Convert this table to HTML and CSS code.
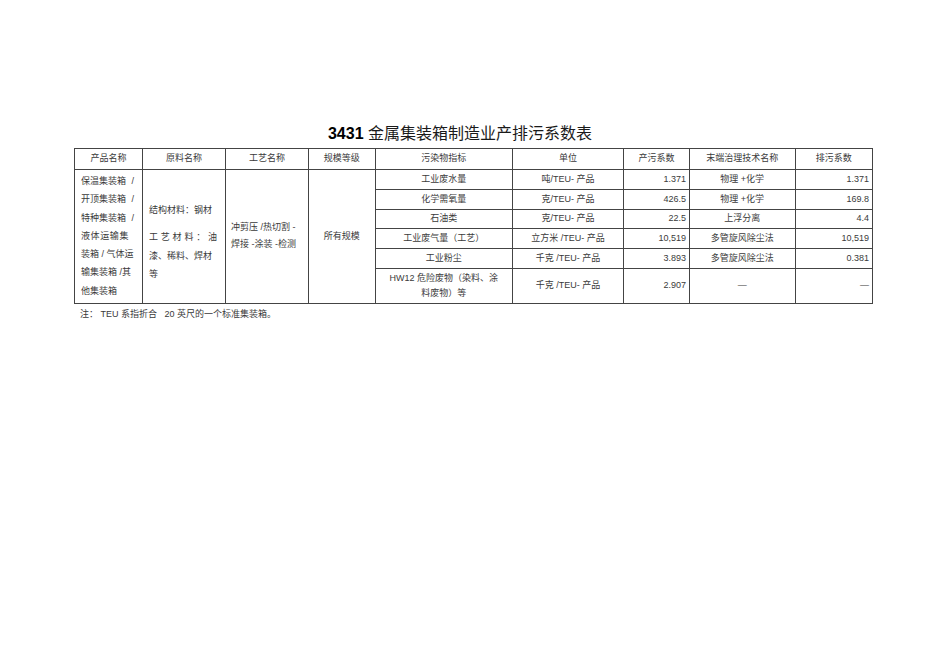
FILE: index.html
```html
<!DOCTYPE html>
<html lang="zh-CN">
<head>
<meta charset="utf-8">
<title>3431 金属集装箱制造业产排污系数表</title>
<link rel="stylesheet" href="styles.css">
</head>
<body>
<div class="page">
  <div class="title"><b>3431</b> 金属集装箱制造业产排污系数表</div>
  <table class="coef">
    <colgroup>
      <col class="c1"><col class="c2"><col class="c3"><col class="c4"><col class="c5"><col class="c6"><col class="c7"><col class="c8"><col class="c9">
    </colgroup>
    <tr class="head">
      <td>产品名称</td><td>原料名称</td><td>工艺名称</td><td>规模等级</td><td>污染物指标</td><td>单位</td><td>产污系数</td><td>末端治理技术名称</td><td>排污系数</td>
    </tr>
    <tr class="r1">
      <td rowspan="6" class="prod">
        <div class="ln sb"><span>保温集装箱</span><span>/</span></div>
        <div class="ln sb"><span>开顶集装箱</span><span>/</span></div>
        <div class="ln sb"><span>特种集装箱</span><span>/</span></div>
        <div class="ln sp">液体运输集</div>
        <div class="ln">装箱 / 气体运</div>
        <div class="ln">输集装箱 /其</div>
        <div class="ln">他集装箱</div>
      </td>
      <td rowspan="6" class="mat">
        <div class="ln first">结构材料：钢材</div>
        <div class="ln just">工艺材料：油</div>
        <div class="ln">漆、稀料、焊材</div>
        <div class="ln">等</div>
      </td>
      <td rowspan="6" class="proc">冲剪压 /热切割 -<br>焊接 -涂装 -检测</td>
      <td rowspan="6">所有规模</td>
      <td>工业废水量</td><td>吨/TEU- 产品</td><td class="num">1.371</td><td>物理 +化学</td><td class="num">1.371</td>
    </tr>
    <tr class="r2">
      <td>化学需氧量</td><td>克/TEU- 产品</td><td class="num">426.5</td><td>物理 +化学</td><td class="num">169.8</td>
    </tr>
    <tr class="r3">
      <td>石油类</td><td>克/TEU- 产品</td><td class="num">22.5</td><td>上浮分离</td><td class="num">4.4</td>
    </tr>
    <tr class="r4">
      <td>工业废气量（工艺）</td><td>立方米 /TEU- 产品</td><td class="num">10,519</td><td>多管旋风除尘法</td><td class="num">10,519</td>
    </tr>
    <tr class="r5">
      <td>工业粉尘</td><td>千克 /TEU- 产品</td><td class="num">3.893</td><td>多管旋风除尘法</td><td class="num">0.381</td>
    </tr>
    <tr class="r6">
      <td class="two">HW12 危险废物（染料、涂<br>料废物）等</td><td>千克 /TEU- 产品</td><td class="num">2.907</td><td>—</td><td class="num">—</td>
    </tr>
  </table>
  <div class="note">注： TEU 系指折合&nbsp;&nbsp; 20 英尺的一个标准集装箱。</div>
</div>
</body>
</html>
```

FILE: styles.css
```css
html, body {
  margin: 0;
  background: #ffffff;
}

body {
  font-family: "Liberation Sans", "Noto Sans CJK SC", sans-serif;
  color: #3a3a3a;
}

.page {
  padding: 123px 0 0 74px;
}

.title {
  width: 799px;
  box-sizing: border-box;
  padding-right: 27px;
  text-align: center;
  font-size: 16px;
  line-height: 21px;
  margin-bottom: 4px;
  color: #1a1a1a;
}

.title b {
  font-weight: bold;
  color: #000000;
}

.coef {
  border-collapse: collapse;
  table-layout: fixed;
  width: 799px;
  font-size: 9px;
  line-height: 11px;
}

.c1 { width: 68px; }
.c2 { width: 83px; }
.c3 { width: 83px; }
.c4 { width: 66.5px; }
.c5 { width: 137.5px; }
.c6 { width: 111px; }
.c7 { width: 66px; }
.c8 { width: 105.5px; }
.c9 { width: 77.5px; }

.coef td {
  border: 1px solid #444444;
  padding: 0 3px;
  text-align: center;
  vertical-align: middle;
  white-space: nowrap;
}

.head { height: 20.5px; }
.r1 { height: 20px; }
.r2 { height: 20px; }
.r3 { height: 19.5px; }
.r4 { height: 19.5px; }
.r5 { height: 20px; }
.r6 { height: 35px; }

.coef td.num {
  text-align: right;
  padding-right: 3px;
}

.coef td.prod,
.coef td.mat {
  text-align: left;
  padding: 0 8px 0 6px;
  line-height: 18.3px;
}

.coef td.mat {
  padding-top: 12px;
}

.ln.sb {
  display: flex;
  justify-content: space-between;
}

.ln.sp {
  letter-spacing: 0.6px;
}

.ln.first {
  margin-bottom: 9.4px;
}

.ln.just {
  text-align: justify;
  text-align-last: justify;
}

.coef td.proc {
  text-align: left;
  padding-left: 5px;
  line-height: 17px;
}

.coef td.two {
  line-height: 15px;
}

.note {
  margin-top: 5px;
  padding-left: 6px;
  font-size: 9px;
  line-height: 11px;
}
```
